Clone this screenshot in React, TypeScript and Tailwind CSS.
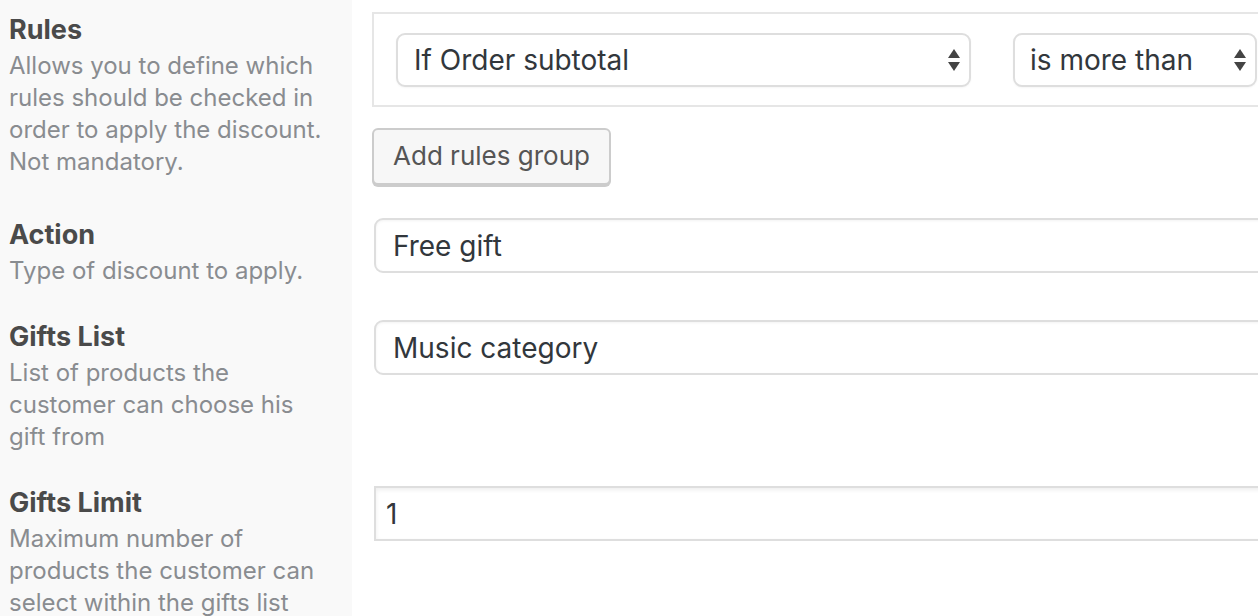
import React from "react";

function Arrows() {
  return (
    <svg width="14" height="24" viewBox="0 0 14 24" className="shrink-0">
      <polygon points="7,1 13,10 1,10" fill="#444" />
      <polygon points="1,14 13,14 7,23" fill="#444" />
    </svg>
  );
}

function Label({ title, lines }: { title: string; lines: string[] }) {
  return (
    <div>
      <div className="text-[27px] leading-[32px] font-bold text-[#4a4a4a]">{title}</div>
      <div className="mt-[4px] text-[24px] leading-[32px] text-[#898c90]">
        {lines.map((l, i) => (
          <div key={i} className="whitespace-nowrap">{l}</div>
        ))}
      </div>
    </div>
  );
}

export default function App() {
  return (
    <div className="w-[1258px] h-[616px] overflow-hidden bg-white font-['Inter','Liberation_Sans',sans-serif]">
      {/* Rules */}
      <div className="flex">
        <div className="w-[352px] shrink-0 bg-[#f9f9f9] pl-[9px] pt-[14px]">
          <Label
            title="Rules"
            lines={[
              "Allows you to define which",
              "rules should be checked in",
              "order to apply the discount.",
              "Not mandatory.",
            ]}
          />
        </div>
        <div className="flex-1 min-w-0 pl-[20px] pt-[12px] pb-[33px]">
          <div className="w-[1000px] h-[95px] border-2 border-[#e6e6e6] pl-[22px] pt-[19px] flex gap-[42px] items-start">
            <div className="w-[575px] h-[54px] rounded-[9px] border-2 border-[#dedede] bg-white flex items-center pl-[16px] pr-[8px] shadow-[0_1px_2px_rgba(0,0,0,0.04)]">
              <span className="flex-1 text-[28px] text-[#32373c]">If Order subtotal</span>
              <Arrows />
            </div>
            <div className="w-[244px] h-[54px] rounded-[9px] border-2 border-[#dedede] bg-white flex items-center pl-[15px] pr-[8px] shadow-[0_1px_2px_rgba(0,0,0,0.04)]">
              <span className="flex-1 text-[28px] text-[#32373c]">is more than</span>
              <Arrows />
            </div>
          </div>
          <button className="mt-[21px] h-[57px] w-[239px] rounded-[6px] border-2 border-[#cccccc] bg-[#f7f7f7] shadow-[0_2px_0_#cccccc] text-[26px] text-[#555] flex items-center justify-center pb-[2px]">
            Add rules group
          </button>
        </div>
      </div>

      {/* Action */}
      <div className="flex">
        <div className="w-[352px] shrink-0 bg-[#f9f9f9] pl-[9px] pt-[1px] pb-[33px]">
          <Label title="Action" lines={["Type of discount to apply."]} />
        </div>
        <div className="flex-1 min-w-0 pl-[22px]">
          <div className="w-[1000px] h-[55px] rounded-[9px] border-2 border-[#dedede] bg-white flex items-center pl-[17px] shadow-[inset_0_1px_3px_rgba(0,0,0,0.05)]">
            <span className="text-[28px] text-[#32373c]">Free gift</span>
          </div>
        </div>
      </div>

      {/* Gifts List */}
      <div className="flex">
        <div className="w-[352px] shrink-0 bg-[#f9f9f9] pl-[9px] pt-[1px] pb-[33px]">
          <Label
            title="Gifts List"
            lines={["List of products the", "customer can choose his", "gift from"]}
          />
        </div>
        <div className="flex-1 min-w-0 pl-[22px]">
          <div className="w-[1000px] h-[55px] rounded-[9px] border-2 border-[#dedede] bg-white flex items-center pl-[17px] shadow-[inset_0_1px_3px_rgba(0,0,0,0.05)]">
            <span className="text-[28px] text-[#32373c]">Music category</span>
          </div>
        </div>
      </div>

      {/* Gifts Limit */}
      <div className="flex">
        <div className="w-[352px] shrink-0 bg-[#f9f9f9] pl-[9px] pt-[1px] pb-[33px]">
          <Label
            title="Gifts Limit"
            lines={["Maximum number of", "products the customer can", "select within the gifts list"]}
          />
        </div>
        <div className="flex-1 min-w-0 pl-[22px]">
          <div className="w-[1000px] h-[55px] border-2 border-[#dedede] bg-white flex items-center pl-[10px] shadow-[inset_0_2px_4px_rgba(0,0,0,0.07)]">
            <span className="text-[28px] text-[#32373c]">1</span>
          </div>
        </div>
      </div>
    </div>
  );
}
